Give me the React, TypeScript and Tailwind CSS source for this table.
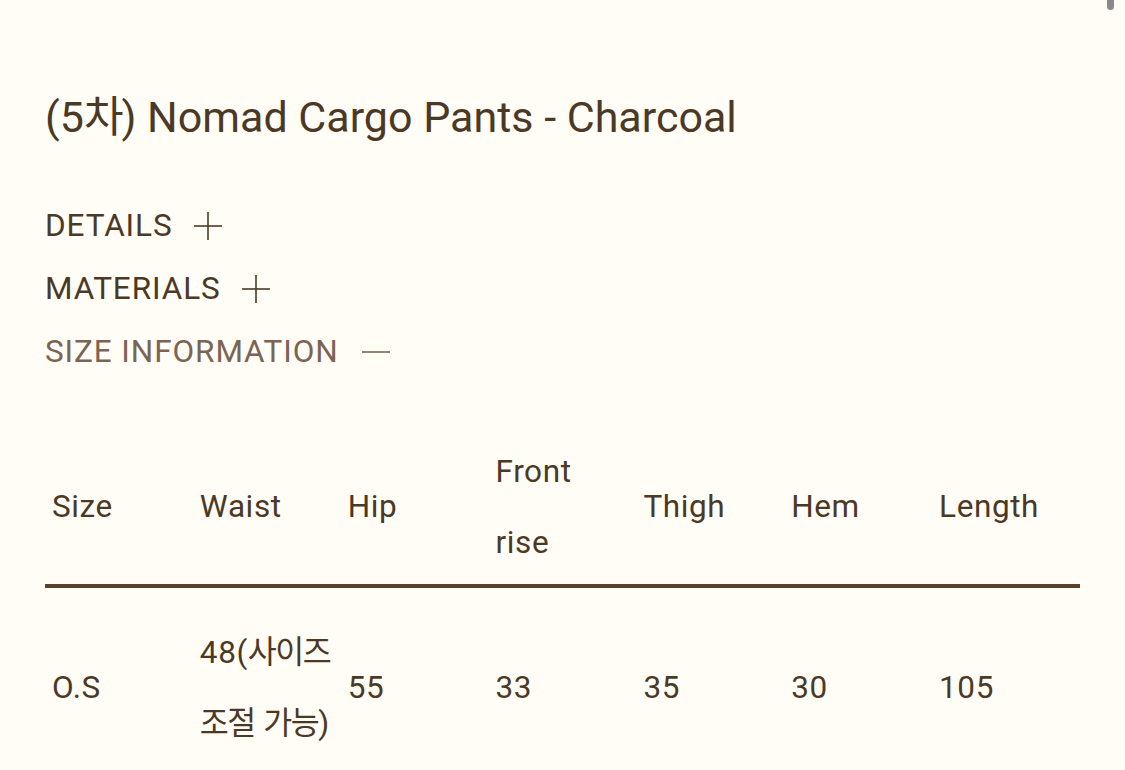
import React from "react";

const font = { fontFamily: 'Roboto, "Noto Sans CJK KR", sans-serif' };

function Plus() {
  return (
    <svg width="28" height="28" viewBox="0 0 28 28" className="shrink-0">
      <line x1="0" y1="14" x2="28" y2="14" stroke="#4b3926" strokeWidth="1.6" />
      <line x1="14" y1="0" x2="14" y2="28" stroke="#4b3926" strokeWidth="1.6" />
    </svg>
  );
}

function Minus() {
  return (
    <svg width="28" height="28" viewBox="0 0 28 28" className="shrink-0">
      <line x1="0" y1="14" x2="28" y2="14" stroke="#7b6454" strokeWidth="1.6" />
    </svg>
  );
}

const K = ({ children }: { children: React.ReactNode }) => (
  <span className="tracking-[-1.5px]">{children}</span>
);

export default function App() {
  const headers: React.ReactNode[] = [
    "Size",
    "Waist",
    "Hip",
    <>
      Front
      <br />
      rise
    </>,
    "Thigh",
    "Hem",
    "Length",
  ];
  const row: React.ReactNode[] = [
    "O.S",
    <>
      <span className="whitespace-nowrap">
        48(<K>사이즈</K>
      </span>
      <br />
      <span className="whitespace-nowrap">
        <K>조절</K> <K>가능</K>)
      </span>
    </>,
    "55",
    "33",
    "35",
    "30",
    "105",
  ];
  return (
    <div
      className="relative min-h-screen bg-[#fffdf5] px-[45px] pt-[90px] text-[#4b3926]"
      style={font}
    >
      <div className="absolute right-[11px] top-0 h-[10px] w-[7px] rounded-b-full bg-[#8a8a8a]" />
      <h1 className="text-[43px] leading-[54px] font-normal">
        (5<span className="tracking-[-2px]">차</span>) Nomad Cargo Pants - Charcoal
      </h1>
      <div className="mt-[50px] flex flex-col text-[31.5px] leading-[63px] tracking-[0.9px]">
        <div className="flex items-center gap-[21px]">
          <span>DETAILS</span>
          <Plus />
        </div>
        <div className="flex items-center gap-[21px]">
          <span>MATERIALS</span>
          <Plus />
        </div>
        <div className="flex items-center gap-[23px] text-[#7b6454]">
          <span>SIZE INFORMATION</span>
          <Minus />
        </div>
      </div>
      <table className="mt-[47px] w-full table-fixed border-collapse text-[31.5px] leading-[2.25] tracking-[0.6px]">
        <thead>
          <tr className="border-b-4 border-[#5a4127]">
            {headers.map((h, i) => (
              <th
                key={i}
                className="px-[7px] pt-[7px] pb-[5px] text-left align-middle font-normal"
              >
                {h}
              </th>
            ))}
          </tr>
        </thead>
        <tbody>
          <tr>
            {row.map((c, i) => (
              <td
                key={i}
                className="px-[7px] pt-[30px] pb-[20px] text-left align-middle"
              >
                {c}
              </td>
            ))}
          </tr>
        </tbody>
      </table>
    </div>
  );
}
